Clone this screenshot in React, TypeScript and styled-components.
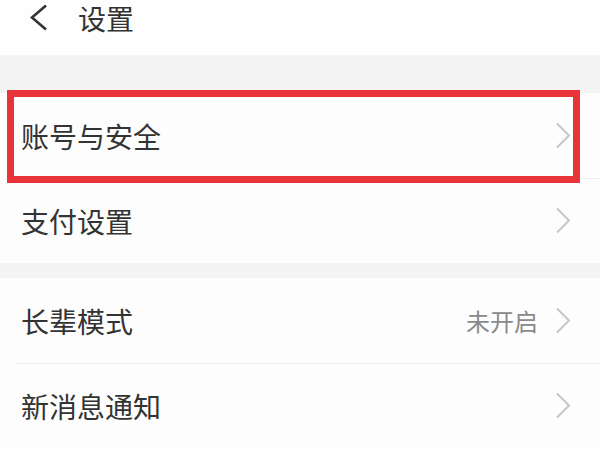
import React from "react";
import styled, { createGlobalStyle } from "styled-components";

const GlobalStyle = createGlobalStyle`
  html, body {
    margin: 0;
    padding: 0;
    background: #fdfdfd;
    font-family: "Noto Sans CJK SC", "Noto Sans", sans-serif;
    overflow: hidden;
  }
`;

type Item = {
  label: string;
  value?: string;
  highlight?: boolean;
};

const groups: Item[][] = [
  [{ label: "账号与安全", highlight: true }, { label: "支付设置" }],
  [{ label: "长辈模式", value: "未开启" }, { label: "新消息通知" }],
];

const Chevron: React.FC<{ color?: string; stroke?: number }> = ({ color = "#c6c6c6", stroke = 2 }) => (
  <svg width={16} height={27} viewBox="0 0 16 27" fill="none">
    <path d="M2 1.5 L14 13.5 L2 25.5" stroke={color} strokeWidth={stroke} />
  </svg>
);

const App: React.FC = () => {
  return (
    <Page>
      <GlobalStyle />
      <Header>
        <BackButton>
          <svg width="19" height="27" viewBox="0 0 19 27" fill="none">
            <path d="M17 1.5 L3 13.5 L17 25.5" stroke="#333" strokeWidth={2.6} />
          </svg>
        </BackButton>
        <Title>设置</Title>
      </Header>
      {groups.map((group, gi) => (
        <React.Fragment key={gi}>
          <Gap $size={gi === 0 ? 38 : 15} />
          <Group>
            {group.map((item, i) => (
              <Row key={item.label} $divider={i > 0}>
                <Label>{item.label}</Label>
                <Right>
                  {item.value && <Value>{item.value}</Value>}
                  <Chevron />
                </Right>
                {item.highlight && <Highlight />}
              </Row>
            ))}
          </Group>
        </React.Fragment>
      ))}
    </Page>
  );
};

const Page = styled.div`
  width: 600px;
  height: 449px;
  background: #fdfdfd;
  overflow: hidden;
`;

const Header = styled.div`
  height: 55px;
  box-sizing: border-box;
  padding: 0 0 20px 29px;
  display: flex;
  align-items: center;
  background: #fefefe;
`;

const BackButton = styled.div`
  width: 49px;
  display: flex;
  align-items: center;
`;

const Title = styled.div`
  font-size: 28px;
  line-height: 30px;
  color: #333;
`;

const Gap = styled.div<{ $size: number }>`
  height: ${(p) => p.$size}px;
  background: #f4f4f4;
`;

const Group = styled.div`
  background: #fdfdfd;
`;

const Row = styled.div<{ $divider: boolean }>`
  position: relative;
  height: 85px;
  display: flex;
  align-items: center;
  justify-content: space-between;
  padding: 0 29px 0 21px;

  &::before {
    content: "";
    display: ${(p) => (p.$divider ? "block" : "none")};
    position: absolute;
    top: 0;
    left: 15px;
    right: 0;
    height: 1px;
    background: #ededed;
  }
`;

const Label = styled.div`
  font-size: 28px;
  color: #333;
`;

const Right = styled.div`
  display: flex;
  align-items: center;
  gap: 17px;
`;

const Value = styled.div`
  font-size: 24px;
  color: #8a8a8a;
`;

const Highlight = styled.div`
  position: absolute;
  z-index: 2;
  top: -3px;
  left: 7px;
  right: 20px;
  bottom: -5px;
  border: 7px solid #e8333a;
  pointer-events: none;
`;

export default App;
